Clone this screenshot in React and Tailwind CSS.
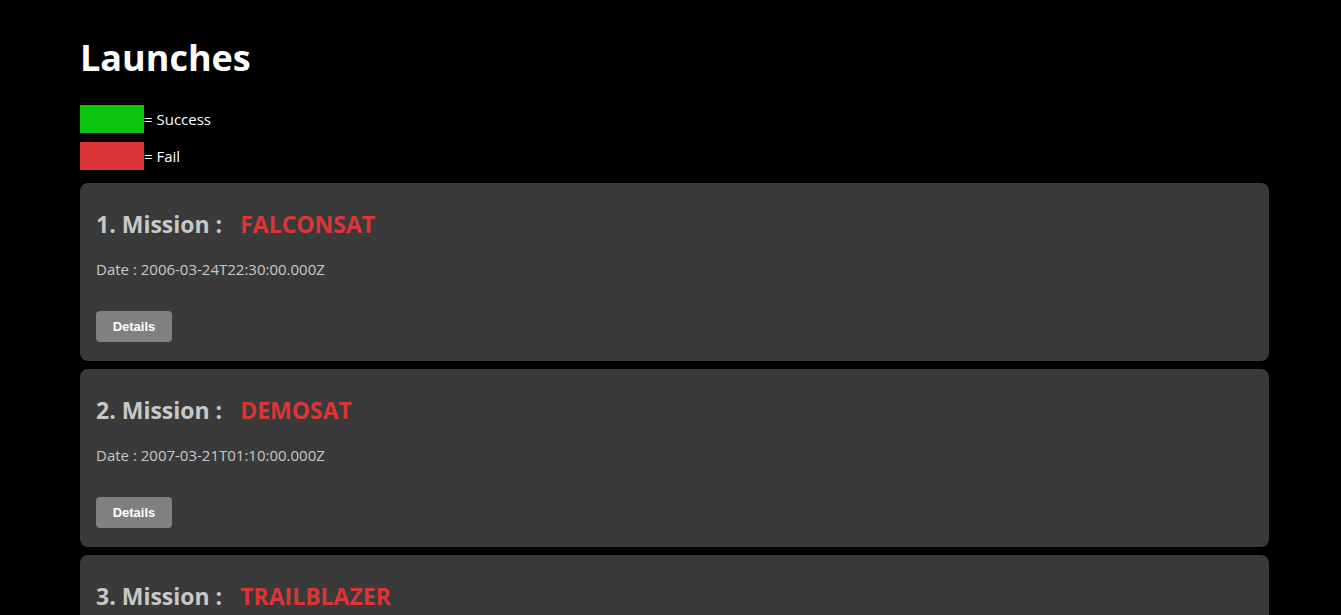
import React from 'react'

const launches = [
  { n: 1, name: 'FALCONSAT', date: '2006-03-24T22:30:00.000Z', success: false },
  { n: 2, name: 'DEMOSAT', date: '2007-03-21T01:10:00.000Z', success: false },
  { n: 3, name: 'TRAILBLAZER', date: '2008-08-03T03:34:00.000Z', success: false },
]

function LaunchCard({ launch }) {
  return (
    <div className="bg-[#3a3a3a] rounded-lg px-4 pt-[25px] pb-[19px]">
      <h3 className="text-[23px] font-bold leading-[32px] text-[#c8c8c8]">
        {launch.n}. Mission :{' '}
        <span className={'ml-3 ' + (launch.success ? 'text-[#0cc40f]' : 'text-[#dc3535]')}>{launch.name}</span>
      </h3>
      <p className="mt-[19px] text-[15px] leading-[20px] text-[#c8c8c8]">Date : {launch.date}</p>
      <button className="mt-[32px] block w-[76px] h-[31px] rounded bg-[#808080] text-white text-[13px] font-bold font-['Liberation_Sans',Arial,sans-serif]">
        Details
      </button>
    </div>
  )
}

export default function App() {
  return (
    <div className="min-h-screen bg-black text-white font-['Open_Sans','Noto_Sans',sans-serif]">
      <div className="ml-[80px] w-[1189px] pt-[34px]">
        <h1 className="text-[36px] font-bold leading-[48px]">Launches</h1>
        <div className="mt-[23px] flex items-center">
          <span className="block w-16 h-7 bg-[#0cc40f]" />
          <span className="text-[15px]">= Success</span>
        </div>
        <div className="mt-[9px] flex items-center">
          <span className="block w-16 h-7 bg-[#dc3535]" />
          <span className="text-[15px]">= Fail</span>
        </div>
        <div className="mt-[13px] flex flex-col gap-2">
          {launches.map((l) => (
            <LaunchCard key={l.n} launch={l} />
          ))}
        </div>
      </div>
    </div>
  )
}
